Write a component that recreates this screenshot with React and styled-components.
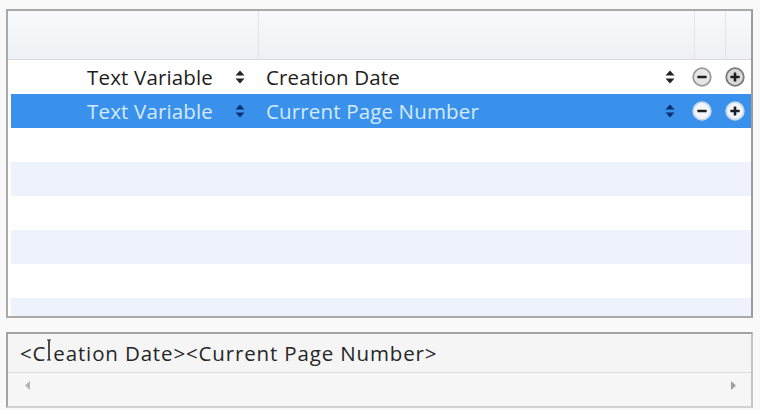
import React from "react";
import styled, { createGlobalStyle } from "styled-components";

const Global = createGlobalStyle`
  html, body { margin: 0; padding: 0; background: #f9f9f9; }
  body { font-family: "Open Sans", "Noto Sans", sans-serif; }
  #root { width: 760px; height: 410px; overflow: hidden; }
`;

const Page = styled.div`
  padding: 9px 7px 0 6px;
  display: flex;
  flex-direction: column;
  gap: 14px;
`;

const ListBox = styled.div`
  height: 309px;
  box-sizing: border-box;
  border: 2px solid #a9a9a9;
  border-right-color: #9c9c9c;
  background: #fff;
  display: flex;
  flex-direction: column;
  overflow: hidden;
`;

const Header = styled.div`
  height: 48px;
  flex: none;
  display: flex;
  background: linear-gradient(#f8f9fb, #eef1f5);
  border-bottom: 1px solid #d6d9de;
`;

const HeadCell = styled.div`
  width: ${(p) => p.w}px;
  flex: ${(p) => (p.grow ? "1" : "none")};
  border-right: 1px solid #e2e4e8;
  &:last-child { border-right: none; }
`;

const Body = styled.div`
  padding-left: 3px;
  display: flex;
  flex-direction: column;
`;

const Row = styled.div`
  height: 34px;
  flex: none;
  display: flex;
  align-items: center;
  font-size: 20.5px;
  letter-spacing: 0.15px;
  background: ${(p) => (p.selected ? "#3a91ec" : p.alt ? "#edf2fb" : "#fff")};
  color: ${(p) => (p.selected ? "#d4eaff" : "#1e1e1e")};
`;

const KindCell = styled.div`
  width: 245px;
  display: flex;
  align-items: center;
  justify-content: flex-end;
  gap: 22px;
  padding-right: 11px;
  box-sizing: border-box;
`;

const ValueCell = styled.div`
  width: 435px;
  display: flex;
  align-items: center;
  justify-content: space-between;
  padding: 0 16px 0 10px;
  box-sizing: border-box;
`;

const ButtonCell = styled.div`
  flex: 1;
  display: flex;
  align-items: center;
  gap: 13px;
  padding-left: 1px;
`;

const Label = styled.span`
  white-space: nowrap;
`;

const Input = styled.div`
  height: 76px;
  box-sizing: border-box;
  border: 2px solid #a3a3a3;
  border-bottom-color: #d2d2d2;
  border-right-color: #c4c4c4;
  background: #f4f4f4;
  display: flex;
  flex-direction: column;
`;

const InputText = styled.div`
  height: 38px;
  flex: none;
  display: flex;
  align-items: center;
  padding-left: 12px;
  font-size: 20.5px;
  letter-spacing: 0.85px;
  color: #262626;
  border-bottom: 1px solid #dedede;
  background: #f5f5f5;
  white-space: nowrap;
`;

const CursorMark = styled.svg`
  flex: none;
  margin: -6px 1px 0 0;
`;

const Scroll = styled.div`
  flex: 1;
  display: flex;
  align-items: center;
  justify-content: space-between;
  padding: 0 14px 8px 16px;
  background: #f6f6f6;
`;

function Spinner({ selected }) {
  const c = selected ? "#0b2f73" : "#222";
  return (
    <svg width="10" height="14" viewBox="0 0 10 14">
      <path d="M5 0.5 L9.5 5.5 L0.5 5.5 Z" fill={c} />
      <path d="M5 13.5 L9.5 8.5 L0.5 8.5 Z" fill={c} />
    </svg>
  );
}

function RoundButton({ plus, selected }) {
  const ring = selected ? "#c9d8ea" : plus ? "#7a7a7a" : "#9a9a9a";
  const fill = selected ? "#f2f6fb" : plus ? "#d9d9d9" : "#e6e6e6";
  const sym = "#1e1e1e";
  return (
    <svg width="20" height="20" viewBox="0 0 20 20">
      <circle cx="10" cy="10" r="8.8" fill={fill} stroke={ring} strokeWidth="1.8" />
      <rect x="5.4" y="8.7" width="9.2" height="2.6" rx="0.6" fill={sym} />
      {plus && <rect x="8.7" y="5.4" width="2.6" height="9.2" rx="0.6" fill={sym} />}
    </svg>
  );
}

function Cursor() {
  return (
    <CursorMark width="6" height="22" viewBox="0 0 6 22">
      <path d="M3 1 V21" stroke="#222" strokeWidth="1.6" />
      <path d="M1 1 H5 M1 21 H5" stroke="#222" strokeWidth="1.2" />
    </CursorMark>
  );
}

function ArrowL() {
  return (
    <svg width="7" height="11" viewBox="0 0 7 11">
      <path d="M6 1 L1 5.5 L6 10 Z" fill="#b5b5b5" />
    </svg>
  );
}
function ArrowR() {
  return (
    <svg width="7" height="11" viewBox="0 0 7 11">
      <path d="M1 1 L6 5.5 L1 10 Z" fill="#a0a0a0" />
    </svg>
  );
}

const rows = [
  { kind: "Text Variable", value: "Creation Date" },
  { kind: "Text Variable", value: "Current Page Number", selected: true },
  {}, {}, {}, {}, {}, {},
];

export default function App() {
  return (
    <>
      <Global />
      <Page>
        <ListBox>
          <Header>
            <HeadCell w={250} />
            <HeadCell w={435} />
            <HeadCell w={30} />
            <HeadCell grow />
          </Header>
          <Body>
            {rows.map((r, i) => (
              <Row key={i} selected={r.selected} alt={i % 2 === 1 && !r.selected}>
                {r.kind && (
                  <>
                    <KindCell>
                      <Label>{r.kind}</Label>
                      <Spinner selected={r.selected} />
                    </KindCell>
                    <ValueCell>
                      <Label>{r.value}</Label>
                      <Spinner selected={r.selected} />
                    </ValueCell>
                    <ButtonCell>
                      <RoundButton selected={r.selected} />
                      <RoundButton plus selected={r.selected} />
                    </ButtonCell>
                  </>
                )}
              </Row>
            ))}
          </Body>
        </ListBox>
        <Input>
          <InputText>
            &lt;C<Cursor />eation Date&gt;&lt;Current Page Number&gt;
          </InputText>
          <Scroll>
            <ArrowL />
            <ArrowR />
          </Scroll>
        </Input>
      </Page>
    </>
  );
}
